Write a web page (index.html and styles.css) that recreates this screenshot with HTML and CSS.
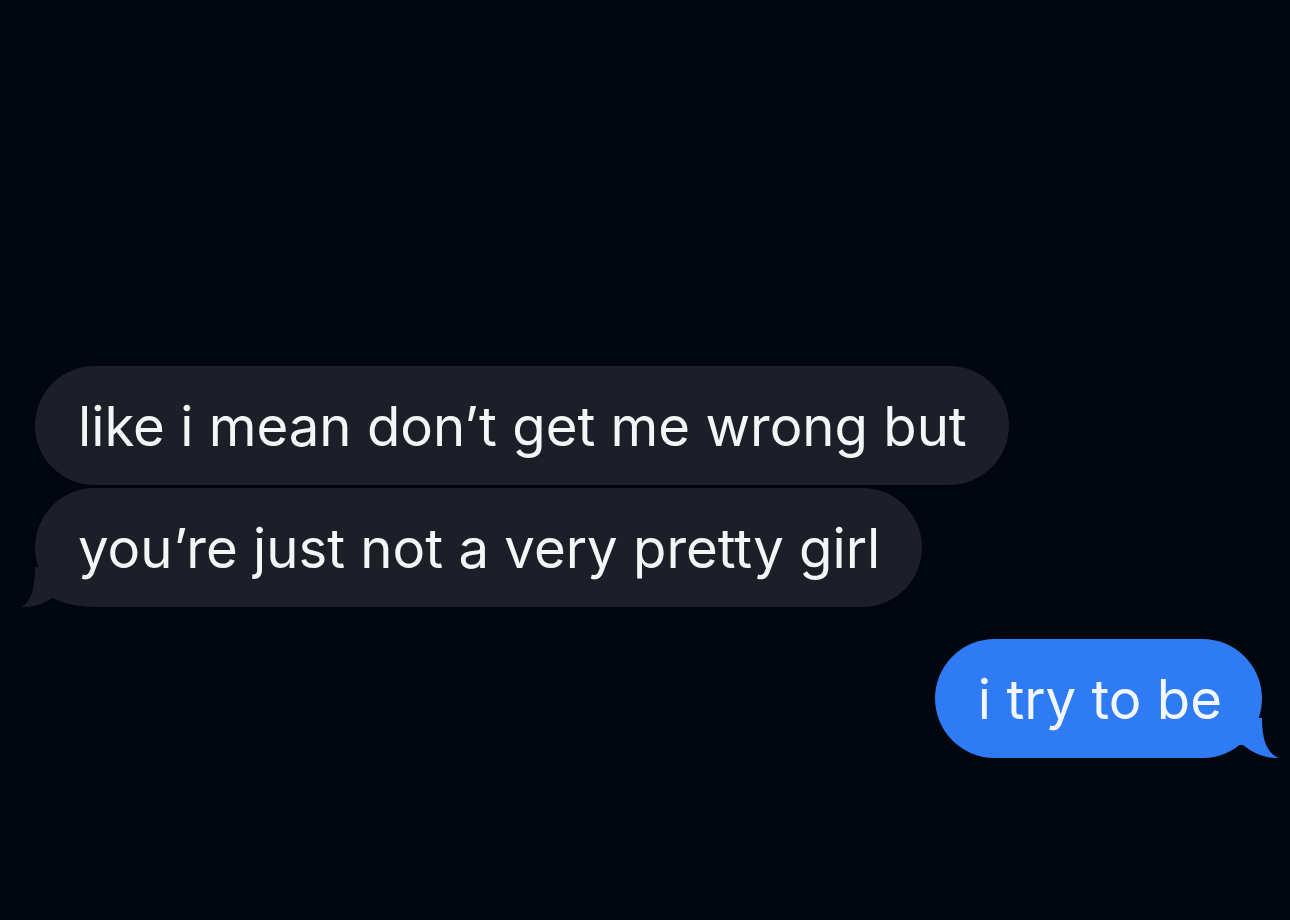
FILE: index.html
```html
<!DOCTYPE html>
<html>
<head>
<meta charset="utf-8">
<link rel="stylesheet" href="styles.css">
</head>
<body>
<main class="chat">
  <div class="bubble received">like i mean don’t get me wrong but</div>
  <div class="bubble received">you’re just not a very pretty girl<svg class="tail tail-left" viewBox="0 0 60 40" aria-hidden="true"><path d="M14 0 C14 26 8 36 0 40 C12 40.5 23 37 31 31 C40 35 50 38 60 39 L60 0 Z"/></svg></div>
  <div class="bubble sent">i try to be<svg class="tail tail-right" viewBox="0 0 60 40" aria-hidden="true"><path d="M43 0 C43 26 50 36 60 40 C48 40.5 35 36 24 27 L0 27 L0 0 Z"/></svg></div>
</main>
</body>
</html>
```
FILE: styles.css
```css
html, body {
  margin: 0;
  padding: 0;
  background: #02060e;
  height: 100%;
  overflow: hidden;
}
.chat {
  display: flex;
  flex-direction: column;
  padding: 366px 28px 0 35px;
  font-family: Inter, "Noto Sans", sans-serif;
}
.bubble {
  position: relative;
  box-sizing: border-box;
  height: 119px;
  display: flex;
  align-items: center;
  padding: 0 42px 0 43px;
  border-radius: 60px;
  font-size: 54.5px;
  color: #f4f5f7;
  white-space: nowrap;
}
.received {
  align-self: flex-start;
  background: #1c1f27;
}
.received + .received {
  margin-top: 3px;
}
.sent {
  align-self: flex-end;
  margin-top: 32px;
  padding: 0 40px 0 43px;
  background: #2f7bf4;
  color: #f2f7ff;
}
.tail {
  position: absolute;
  bottom: 0;
  width: 60px;
  height: 40px;
}
.tail-left {
  left: -14px;
  fill: #1c1f27;
}
.tail-right {
  right: -17px;
  fill: #2f7bf4;
}
```
